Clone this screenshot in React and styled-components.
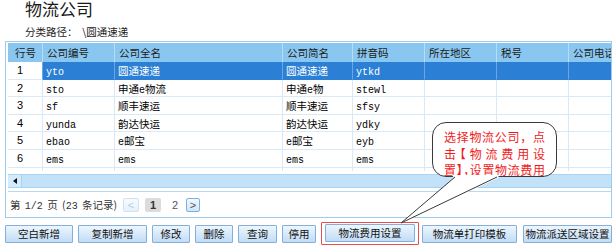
import React from "react";
import styled, { createGlobalStyle } from "styled-components";

const Global = createGlobalStyle`
  html, body { margin: 0; padding: 0; background: #fff; overflow: hidden; }
  body { font-family: "Noto Sans CJK SC", "Noto Sans", sans-serif; color: #111; }
  * { box-sizing: border-box; }
`;

const Page = styled.div`
  position: relative;
  width: 614px;
  height: 246px;
  padding: 0 2px 0 5px;
  overflow: hidden;
`;

const Title = styled.div`
  height: 20px;
  padding-left: 20px;
  font-size: 17px;
  line-height: 17px;
  color: #1a1a1a;
`;

const Path = styled.div`
  height: 21px;
  padding-left: 20px;
  font-size: 10.5px;
  line-height: 24px;
  color: #222;
`;

const Panel = styled.div`
  width: 607px;
  border: 1px solid #9fcbee;
  padding: 1px 0 0 2px;
  overflow: hidden;
`;

const GridBox = styled.div`
  width: 606px;
  border-bottom: 1px solid #b5d8f3;
  padding-bottom: 3px;
  overflow: hidden;
`;

const COLS = "35px 72px 168px 70px 72px 72px 72px 90px";

const HeaderRow = styled.div`
  display: grid;
  grid-template-columns: ${COLS};
  height: 19px;
  background: #8ac7f0;
  width: 651px;
`;

const HeadCell = styled.div`
  padding-left: ${(p) => (p.$first ? 7 : 4)}px;
  font-size: 10.5px;
  line-height: 19px;
  color: #1a1a1a;
  border-right: 1px solid #b9dcf6;
  white-space: nowrap;
  overflow: hidden;
`;

const Body = styled.div`
  height: 109px;
  overflow: hidden;
  width: 651px;
`;

const Row = styled.div`
  display: grid;
  grid-template-columns: ${COLS};
  height: 17.6px;
  background: ${(p) => (p.$selected ? "#2b7fd5" : "#fff")};
  color: ${(p) => (p.$selected ? "#fff" : "#000")};
`;

const Cell = styled.div`
  padding-left: ${(p) => (p.$num ? 9 : 3)}px;
  font-size: 10.5px;
  line-height: 17px;
  white-space: nowrap;
  overflow: hidden;
  border-right: 1px solid ${(p) => (p.$selected ? "#6ba7e6" : "#d9e9f7")};
  border-bottom: 1px solid ${(p) => (p.$selected ? "#2b7fd5" : "#d9e9f7")};
  ${(p) =>
    p.$num &&
    `background: #fff; color: #000; font-size: 11px; font-family: "Liberation Sans", sans-serif; border-bottom-color: #d9e9f7;`}
`;

const Latin = styled.span`
  font-family: "Liberation Mono", monospace;
  font-size: 10px;
`;

const Scrollbar = styled.div`
  margin-top: 3px;
  height: 14px;
  width: 604px;
  background: #c2e2fa;
  border-top: 1px solid #a8d3f3;
  border-bottom: 1px solid #a8d3f3;
  display: flex;
`;

const ArrowBtn = styled.div`
  width: 14px;
  height: 100%;
  background: #d3ebfc;
  border-right: 1px solid #a8d3f3;
  display: flex;
  align-items: center;
  justify-content: center;
  &::before {
    content: "";
    border-style: solid;
    border-width: 3px 4px 3px 0;
    border-color: transparent #111 transparent transparent;
  }
`;

const Pager = styled.div`
  height: 25px;
  display: flex;
  align-items: center;
  padding-left: 2px;
  font-size: 10.5px;
  color: #333;
`;

const PagerText = styled.span`
  white-space: pre;
  width: 113px;
  word-spacing: 2px;
`;

const PageBtn = styled.div`
  width: ${(p) => p.$w || 16}px;
  height: 14px;
  margin-right: ${(p) => p.$mr || 6}px;
  display: flex;
  align-items: center;
  justify-content: center;
  font-family: "Liberation Sans", sans-serif;
  font-size: 11px;
  font-weight: ${(p) => (p.$current ? "bold" : "normal")};
  color: ${(p) => (p.$disabled ? "#b8cde3" : p.$current ? "#333" : "#555")};
  background: ${(p) =>
    p.$current
      ? "#dcdcdc"
      : p.$arrow
      ? "linear-gradient(#f2f8fe, #cfe5f9)"
      : "transparent"};
  border: 1px solid
    ${(p) => (p.$disabled ? "#cfe0f2" : p.$arrow ? "#7fb0e0" : "transparent")};
  border-radius: 2px;
  ${(p) => p.$disabled && "background: linear-gradient(#f7fbff, #e6f1fb);"}
`;

const Toolbar = styled.div`
  display: flex;
  align-items: center;
  gap: 5px;
  margin-top: 4px;
`;

const Button = styled.button`
  width: ${(p) => p.$w}px;
  height: 18px;
  margin: 0;
  padding: 0;
  border: 1px solid #86aedb;
  border-radius: 1px;
  background: linear-gradient(#eef6fd 0%, #d6e9fa 50%, #c2dcf5 100%);
  font-family: "Noto Sans CJK SC", sans-serif;
  font-size: 10.5px;
  line-height: 16px;
  color: #111;
  white-space: nowrap;
  ${(p) => p.$ml && `margin-left: ${p.$ml}px;`}
`;

const Highlight = styled.div`
  padding: 1px 3px 2px;
  border: 1px solid #ea4b4b;
  border-radius: 1px;
  display: flex;
`;

const Bubble = styled.div`
  position: absolute;
  left: 432px;
  top: 122px;
  width: 125px;
  height: 55px;
  background: #fff;
  border: 1px solid #3a3a3a;
  border-radius: 14px;
  padding: 6px 0 0 11px;
  color: #f01c1c;
  font-size: 12px;
  line-height: 16.5px;
`;

const BubbleLine = styled.div`
  width: 101px;
  display: flex;
  justify-content: space-between;
  white-space: nowrap;
`;

const Punct = styled.span`
  font-feature-settings: "halt";
`;

const Tail = styled.svg`
  position: absolute;
  left: 395px;
  top: 170px;
  overflow: visible;
`;

const rows = [
  ["1", "yto", "圆通速递", "圆通速递", "ytkd"],
  ["2", "sto", "申通e物流", "申通e物", "stewl"],
  ["3", "sf", "顺丰速运", "顺丰速运", "sfsy"],
  ["4", "yunda", "韵达快运", "韵达快运", "ydky"],
  ["5", "ebao", "e邮宝", "e邮宝", "eyb"],
  ["6", "ems", "ems", "ems", "ems"],
  ["", "", "", "", ""],
];

const headers = ["行号", "公司编号", "公司全名", "公司简名", "拼音码", "所在地区", "税号", "公司电话"];

const runs = (s) =>
  s
    .split(/([\x00-\x7f]+)/)
    .filter(Boolean)
    .map((part, i) =>
      /^[\x00-\x7f]+$/.test(part) ? <Latin key={i}>{part}</Latin> : <span key={i}>{part}</span>
    );

const spread = (s, narrow = "") =>
  [...s].map((ch, i) =>
    narrow.includes(ch) ? <Punct key={i}>{ch}</Punct> : <span key={i}>{ch}</span>
  );

const buttons = [
  ["空白新增", 68],
  ["复制新增", 69],
  ["修改", 38],
  ["删除", 38],
  ["查询", 39],
  ["停用", 34],
];

export default function App() {
  return (
    <Page>
      <Global />
      <Title>物流公司</Title>
      <Path>分类路径：&nbsp;&nbsp;\圆通速递</Path>
      <Panel>
        <GridBox>
          <HeaderRow>
            {headers.map((h, i) => (
              <HeadCell key={h} $first={i === 0}>{h}</HeadCell>
            ))}
          </HeaderRow>
          <Body>
            {rows.map((r, ri) => {
              const sel = ri === 0;
              const cells = [...r, "", "", ""];
              return (
                <Row key={ri} $selected={sel}>
                  {cells.map((c, ci) => (
                    <Cell key={ci} $num={ci === 0} $selected={sel}>
                      {ci === 0 ? c : runs(c)}
                    </Cell>
                  ))}
                </Row>
              );
            })}
          </Body>
          <Scrollbar>
            <ArrowBtn />
          </Scrollbar>
        </GridBox>
        <Pager>
          <PagerText>
            第 <Latin>1/2</Latin> 页 (<Latin>23</Latin> 条记录)
          </PagerText>
          <PageBtn $arrow $disabled $mr={6}>&lt;</PageBtn>
          <PageBtn $current $mr={6}>1</PageBtn>
          <PageBtn $mr={3}>2</PageBtn>
          <PageBtn $arrow $w={14}>&gt;</PageBtn>
        </Pager>
      </Panel>
      <Toolbar>
        {buttons.map(([t, w]) => (
          <Button key={t} $w={w}>{t}</Button>
        ))}
        <Highlight>
          <Button $w={90}>物流费用设置</Button>
        </Highlight>
        <Button $w={95} $ml={-2}>物流单打印模板</Button>
        <Button $w={89} $ml={1}>物流派送区域设置</Button>
      </Toolbar>
      <Bubble>
        <BubbleLine>{spread("选择物流公司，点")}</BubbleLine>
        <BubbleLine>{spread("击【物流费用设", "【")}</BubbleLine>
        <BubbleLine>{spread("置】，设置物流费用", "】，")}</BubbleLine>
      </Bubble>
      <Tail width="110" height="60">
        <polygon points="57,5 104,5 103,8 6,53 59,8" fill="#fff" />
        <line x1="60" y1="7" x2="6" y2="53" stroke="#3a3a3a" strokeWidth="1" />
        <line x1="102" y1="7" x2="6" y2="53" stroke="#3a3a3a" strokeWidth="1" />
      </Tail>
    </Page>
  );
}
